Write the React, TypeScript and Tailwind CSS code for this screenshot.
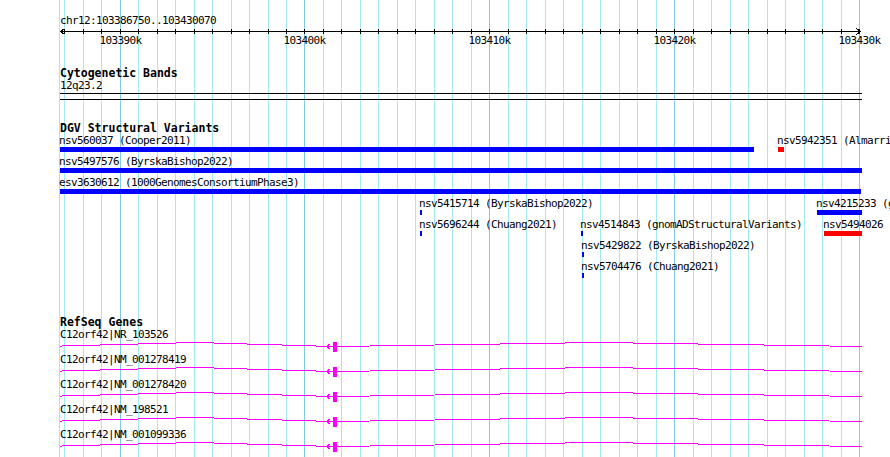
import React from 'react';

const START = 103386750;
const END = 103430070;
const LEFT = 60;
const SPAN = 801;
const toX = (bp: number) => LEFT + ((bp - START) * SPAN) / (END - START);

const kbs = Array.from({ length: 44 }, (_, i) => 103387 + i);

type Feature = { label: string; x: number; w: number; red?: boolean };

const dgvRows: Feature[][] = [
  [
    { label: 'nsv560037 (Cooper2011)', x: 60, w: 694 },
    { label: 'nsv5942351 (Almarri2020)', x: 778, w: 6, red: true },
  ],
  [{ label: 'nsv5497576 (ByrskaBishop2022)', x: 60, w: 802 }],
  [{ label: 'esv3630612 (1000GenomesConsortiumPhase3)', x: 60, w: 801 }],
  [
    { label: 'nsv5415714 (ByrskaBishop2022)', x: 420, w: 2 },
    { label: 'nsv4215233 (gnomADStructuralVariants)', x: 817, w: 45 },
  ],
  [
    { label: 'nsv5696244 (Chuang2021)', x: 420, w: 2 },
    { label: 'nsv4514843 (gnomADStructuralVariants)', x: 581, w: 2 },
    { label: 'nsv5494026', x: 824, w: 38, red: true },
  ],
  [{ label: 'nsv5429822 (ByrskaBishop2022)', x: 582, w: 2 }],
  [{ label: 'nsv5704476 (Chuang2021)', x: 582, w: 2 }],
];

const genes = [
  'C12orf42|NR_103526',
  'C12orf42|NM_001278419',
  'C12orf42|NM_001278420',
  'C12orf42|NM_198521',
  'C12orf42|NM_001099336',
];

const GridLines = () => (
  <svg className="absolute inset-0" width={890} height={457} shapeRendering="crispEdges">
    <rect x={59} y={0} width={1} height={457} fill="#a4e8f0" />
    {kbs.map((k) => (
      <rect
        key={k}
        x={Math.floor(toX(k * 1000))}
        y={0}
        width={1}
        height={457}
        fill={k % 10 === 0 ? '#84c8e8' : '#a4e8f0'}
      />
    ))}
  </svg>
);

const Ruler = () => (
  <svg width={830} height={20} viewBox="60 0 830 20" className="block">
    <g shapeRendering="crispEdges" fill="#000">
      <rect x={60} y={4} width={801} height={1} />
      {kbs.map((k) => (
        <rect key={k} x={Math.floor(toX(k * 1000))} y={2} width={1} height={5} />
      ))}
      <polyline points="64.5,1.5 60.5,4.5 64.5,7.5" fill="none" stroke="#000" />
      <polyline points="856.5,1.5 860.5,4.5 856.5,7.5" fill="none" stroke="#000" />
    </g>
    {kbs
      .filter((k) => k % 10 === 0)
      .map((k) => (
        <text
          key={k}
          x={Math.floor(toX(k * 1000)) + 0.5}
          y={17}
          fontSize={11}
          letterSpacing={-0.62}
          textAnchor="middle"
          fontFamily="'DejaVu Sans Mono', monospace"
          fill="#000"
        >
          {k}k
        </text>
      ))}
  </svg>
);

const TrackTitle = ({ children, className = '' }: { children: React.ReactNode; className?: string }) => (
  <div className={`text-[11.5px] font-bold leading-[13px] ${className}`}>{children}</div>
);

const GeneModel = () => (
  <svg width={830} height={13} viewBox="60 340 830 13" className="block">
    <g shapeRendering="crispEdges" fill="none" stroke="#ff00ff">
      <polyline points="43,345.5 196,341.5 333,345.5" />
      <polyline points="337,345.5 599,341.5 862,345.5" />
      <polyline points="330.5,342.5 326.5,345.5 330.5,348.5" />
    </g>
    <rect x={333} y={341} width={4} height={10} fill="#ff00ff" shapeRendering="crispEdges" />
  </svg>
);

export default function App() {
  return (
    <div className="relative w-[890px] h-[457px] overflow-hidden bg-white text-black font-['DejaVu_Sans_Mono',monospace]">
      <GridLines />
      <div className="relative flex flex-col pl-[60px]">
        <div className="pt-[15px] text-[11px] leading-[12px] tracking-[-0.62px]">chr12:103386750..103430070</div>
        <Ruler />

        <TrackTitle className="mt-[20px]">Cytogenetic Bands</TrackTitle>
        <div className="text-[11px] leading-[12px] tracking-[-0.62px]">12q23.2</div>
        <div className="mt-px h-[7px] w-[802px] border-y border-black" />

        <TrackTitle className="mt-[22px]">DGV Structural Variants</TrackTitle>
        <div className="flex flex-col">
          {dgvRows.map((row, i) => (
            <div key={i} className="relative h-[21px] w-[830px]">
              {row.map((f) => (
                <div
                  key={f.label}
                  className="absolute top-0 flex flex-col"
                  style={{ left: f.x - LEFT }}
                >
                  <span className="-ml-px whitespace-nowrap text-[11px] leading-[12px] tracking-[-0.62px]">
                    {f.label}
                  </span>
                  <div
                    className={`h-[5px] ${f.red ? 'bg-[#ff0000]' : 'bg-[#0000ff]'}`}
                    style={{ width: f.w }}
                  />
                </div>
              ))}
            </div>
          ))}
        </div>

        <TrackTitle className="mt-[34px] leading-[12px]">RefSeq Genes</TrackTitle>
        <div className="flex flex-col">
          {genes.map((g) => (
            <div key={g} className="h-[25px]">
              <div className="whitespace-nowrap text-[11px] leading-[12px] tracking-[-0.62px]">{g}</div>
              <GeneModel />
            </div>
          ))}
        </div>
      </div>
    </div>
  );
}
